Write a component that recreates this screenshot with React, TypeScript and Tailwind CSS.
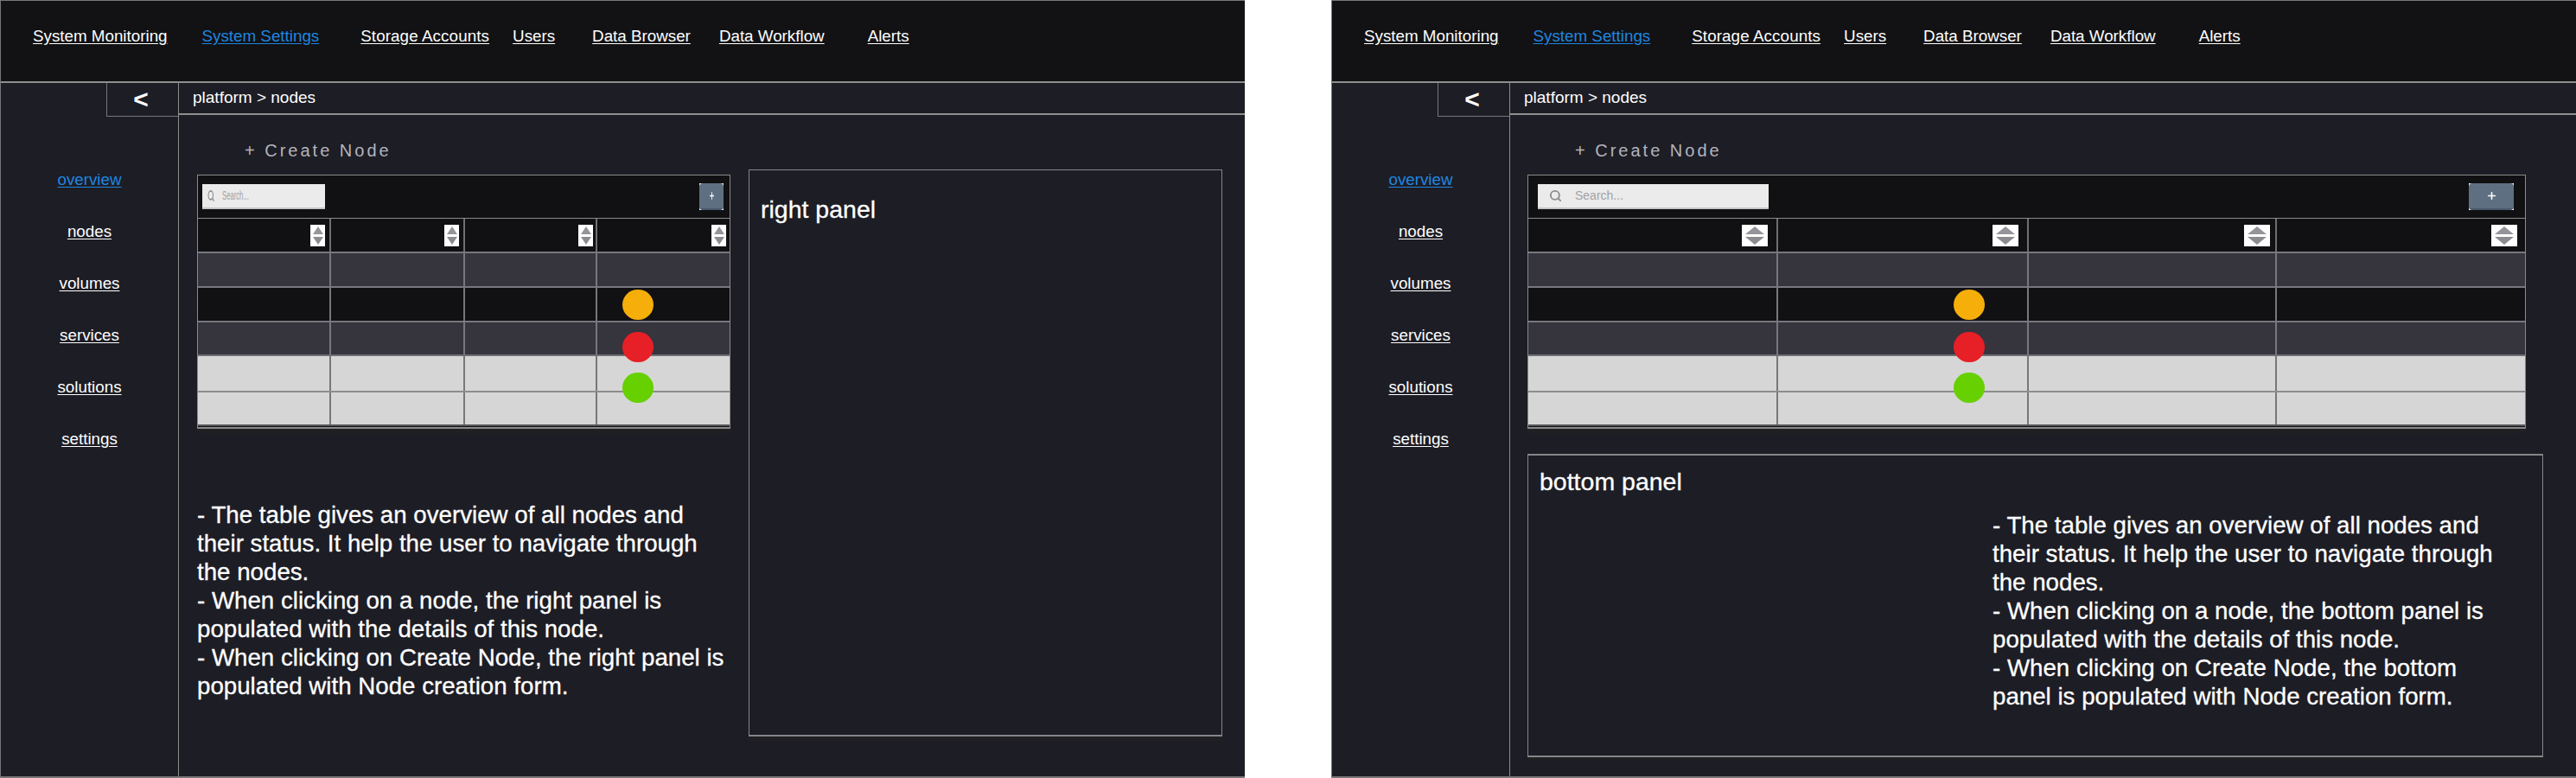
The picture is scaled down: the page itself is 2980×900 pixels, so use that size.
import React from 'react';
import { Plus, Search } from 'lucide-react';

const topNav = [
  { label: 'System Monitoring', className: 'ml-[37px] text-white' },
  { label: 'System Settings', className: 'ml-[40px] text-[#1f86e0]' },
  { label: 'Storage Accounts', className: 'ml-[48px] tracking-[0.1px] text-white' },
  { label: 'Users', className: 'ml-[27px] text-white' },
  { label: 'Data Browser', className: 'ml-[43px] text-white' },
  { label: 'Data Workflow', className: 'ml-[33px] text-white' },
  { label: 'Alerts', className: 'ml-[50px] text-white' },
];

const sideNav = ['overview', 'nodes', 'volumes', 'services', 'solutions', 'settings'];

const rows = [
  { bg: 'bg-[#36353e]', height: 'h-[38px]', border: 'border-b-2 border-[#77777f]' },
  { bg: 'bg-[#111113]', height: 'h-[38px]', border: 'border-b-2 border-[#77777f]' },
  { bg: 'bg-[#36353e]', height: 'h-[37px]', border: 'border-b-2 border-[#6f6f73]' },
  { bg: 'bg-[#d6d6d6]', height: 'h-[40px]', border: 'border-b-2 border-[#8d8d8d]' },
  { bg: 'bg-[#d6d6d6]', height: 'h-[37px]', border: 'border-b-2 border-[#55555a]' },
];

const sortPadNarrow = ['pr-[5px]', 'pr-[5px]', 'pr-[3px]', 'pr-[4px]'];
const sortPadWide = ['pr-[10px]', 'pr-[10px]', 'pr-[6px]', 'pr-[9px]'];

function SortButton({ wide }: { wide: boolean }) {
  return (
    <div className={`flex h-[25px] flex-col items-center justify-center gap-[3px] bg-white ${wide ? 'w-[30px]' : 'w-[17px]'}`}>
      <svg viewBox="0 0 30 10" preserveAspectRatio="none" className={`h-[9px] ${wide ? 'w-[22px]' : 'w-[12px]'}`}>
        <polygon points="15,0 30,10 0,10" fill="#94949a" />
      </svg>
      <svg viewBox="0 0 30 10" preserveAspectRatio="none" className={`h-[9px] ${wide ? 'w-[22px]' : 'w-[12px]'}`}>
        <polygon points="0,0 30,0 15,10" fill="#8c8c90" />
      </svg>
    </div>
  );
}

function NodeTable({ wide }: { wide: boolean }) {
  const columns = wide ? 'grid-cols-[289px_290px_287px_287px]' : 'grid-cols-[154px_155px_153px_153px]';
  // the status dots sit in the 2nd column on the wide table, the last one on the narrow table
  const dotCol = wide ? 1 : 3;
  const dot = wide ? 'left-[203px]' : 'left-[29px]';
  const sortPad = wide ? sortPadWide : sortPadNarrow;

  return (
    <div className={`border-x border-b-2 border-t border-[#8a8a8a] bg-[#111113] shadow-[0_5px_0_#202022] ${wide ? 'w-[1155px]' : 'w-[617px]'}`}>
      <div className={`flex h-[50px] items-center justify-between border-b border-[#8a8a8a] ${wide ? 'pl-[11px] pr-[13px]' : 'pl-[5px] pr-[7px]'}`}>
        <div className={`flex h-[29px] items-center border-b-2 border-[#c4c4c4] bg-[#ebebeb] ${wide ? 'w-[267px] pl-[13px]' : 'w-[142px] pl-[6px]'}`}>
          <Search className={`h-[15px] w-[15px] shrink-0 text-[#8b8b90] ${wide ? '' : 'origin-left scale-x-[0.55]'}`} strokeWidth={3} />
          <span className={`text-[14px] text-[#a2a2a6] ${wide ? 'ml-[15px]' : 'ml-[2px] origin-left scale-x-[0.55]'}`}>Search...</span>
        </div>
        <button className={`h-[31px] bg-white ${wide ? 'w-[52px]' : 'w-[28px]'}`}>
          <span className="flex h-full w-full items-center justify-center rounded-[4px] border-b-2 border-[#49586a] bg-[#5f6f82] text-white">
            <Plus className={`h-[13px] w-[13px] ${wide ? '' : 'scale-x-[0.55]'}`} strokeWidth={3} />
          </span>
        </button>
      </div>

      <div className={`grid ${columns} border-b-2 border-[#77777f]`}>
        {[0, 1, 2, 3].map((col) => (
          <div key={col} className={`flex h-[38px] items-center justify-end ${sortPad[col]} ${col < 3 ? 'border-r-2 border-[#6f6f73]' : ''}`}>
            <SortButton wide={wide} />
          </div>
        ))}
      </div>

      {rows.map((row, index) => (
        <div key={index} className={`grid ${columns} ${row.bg} ${row.border}`}>
          {[0, 1, 2, 3].map((col) => (
            <div key={col} className={`relative ${row.height} ${col < 3 ? 'border-r-2 border-[#77777c]' : ''}`}>
              {col === dotCol && index === 1 && <span className={`absolute top-[2px] h-[35px] w-[36px] rounded-full bg-[#f5ae0a] ${dot}`} />}
              {col === dotCol && index === 2 && <span className={`absolute top-[11px] h-[35px] w-[36px] rounded-full bg-[#e71f26] ${dot}`} />}
              {col === dotCol && index === 3 && <span className={`absolute top-[19px] h-[35px] w-[36px] rounded-full bg-[#66d000] ${dot}`} />}
            </div>
          ))}
        </div>
      ))}
      <div className="h-[1px]" />
    </div>
  );
}

function Notes({ panel, className }: { panel: string; className: string }) {
  const lines = [
    '- The table gives an overview of all nodes and their status. It help the user to navigate through the nodes.',
    `- When clicking on a node, the ${panel} panel is populated with the details of this node.`,
    `- When clicking on Create Node, the ${panel} panel is populated with Node creation form.`,
  ];

  return (
    <div className={`text-[27.7px] leading-[33px] text-white [-webkit-text-stroke:0.3px_white] ${className}`}>
      {lines.map((line) => (
        <p key={line}>{line}</p>
      ))}
    </div>
  );
}

function Frame({ layout }: { layout: 'right' | 'bottom' }) {
  const wide = layout === 'bottom';

  return (
    <div className="flex h-[900px] w-[1440px] shrink-0 flex-col border-b-2 border-l border-t border-[#77777a] bg-[#1d1d25] font-['Liberation_Sans',Arial,sans-serif]">
      <header className="flex h-[95px] shrink-0 items-start border-b-2 border-[#8e8e8e] bg-[#121214] pt-[28px]">
        {topNav.map((item) => (
          <a key={item.label} className={`text-[18.8px] leading-[26px] underline underline-offset-2 ${item.className}`}>
            {item.label}
          </a>
        ))}
      </header>

      <div className="flex min-h-0 flex-1">
        <aside className="flex w-[206px] shrink-0 flex-col border-r border-[#8a8a8a]">
          <div className="flex justify-end">
            <button className="flex h-[39px] w-[83px] items-center justify-center border-b border-l border-[#77777a] pr-[4px] text-[30px] font-bold leading-none text-white">&lt;</button>
          </div>
          <nav className="flex flex-col items-center gap-[34px] pt-[60px]">
            {sideNav.map((item, index) => (
              <a key={item} className={`text-[18.8px] leading-[26px] underline underline-offset-2 ${index === 0 ? 'text-[#1f86e0]' : 'text-white'}`}>
                {item}
              </a>
            ))}
          </nav>
        </aside>

        <main className="flex min-w-0 flex-1 flex-col">
          <div className="flex h-[37px] shrink-0 items-center border-b-2 border-[#8e8e8e] pl-[16px] text-[19px] text-white">platform &gt; nodes</div>

          <div className={`flex min-h-0 flex-1 ${wide ? 'flex-col' : ''}`}>
            <div className={`flex flex-col ${wide ? 'pl-[20px]' : 'pl-[21px]'}`}>
              <div className="pb-[14px] pl-[55px] pt-[27px] text-[20px] leading-[28px] tracking-[3px] text-[#b4b4bc]">+ Create Node</div>
              <NodeTable wide={wide} />
              {!wide && <Notes panel="right" className="mt-[83px] w-[617px]" />}
            </div>

            {wide ? (
              <section className="ml-[20px] mt-[29px] flex h-[351px] w-[1175px] flex-col border-x border-b-2 border-t-2 border-[#85858a] pl-[13px] pt-[14px] shadow-[0_4px_0_#202022]">
                <h2 className="text-[28.5px] leading-[32px] text-white [-webkit-text-stroke:0.3px_white]">bottom panel</h2>
                <Notes panel="bottom" className="ml-[524px] mt-[18px] w-[590px]" />
              </section>
            ) : (
              <section className="ml-[21px] mt-[63px] h-[656px] w-[548px] border-x border-b-2 border-t border-[#85858a] pl-[13px] pt-[29px] shadow-[0_5px_0_#202022]">
                <h2 className="text-[28.5px] leading-[32px] text-white [-webkit-text-stroke:0.3px_white]">right panel</h2>
              </section>
            )}
          </div>
        </main>
      </div>
    </div>
  );
}

export default function App() {
  return (
    <div className="flex w-[2980px] bg-white">
      <Frame layout="right" />
      <div className="w-[100px] shrink-0" />
      <Frame layout="bottom" />
    </div>
  );
}
